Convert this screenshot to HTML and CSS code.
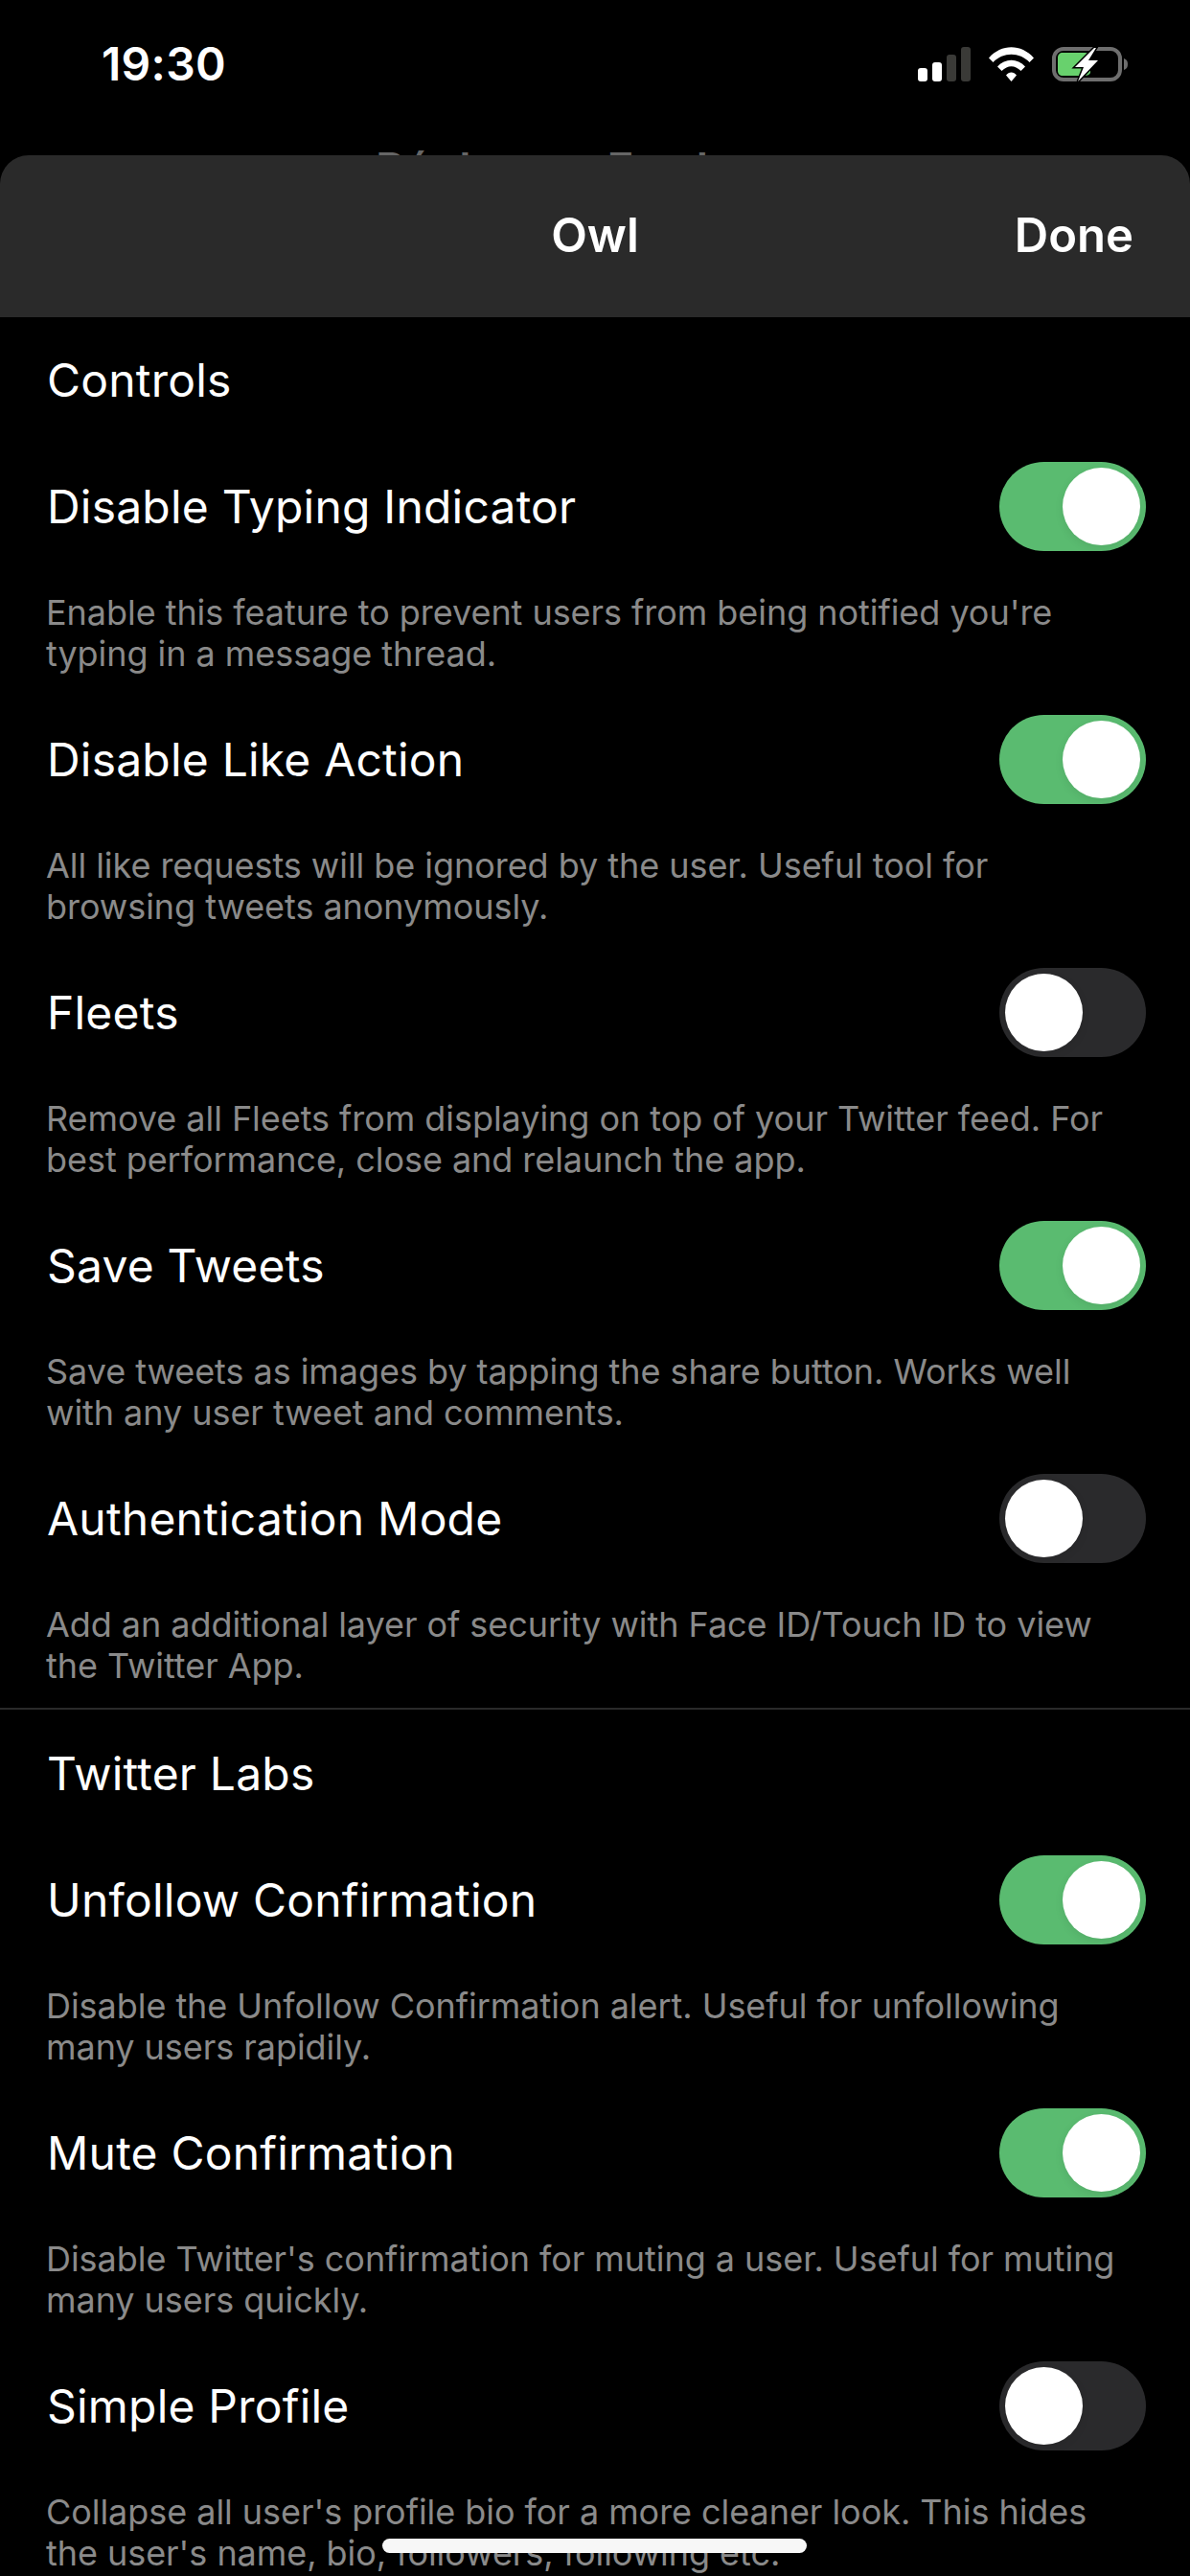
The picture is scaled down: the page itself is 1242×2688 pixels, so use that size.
FILE: index.html
```html
<!DOCTYPE html>
<html lang="en">
<head>
    <meta charset="UTF-8">
    <meta name="viewport" content="width=device-width, initial-scale=1.0">
    <title>Owl</title>
    <link rel="stylesheet" href="styles.css">
</head>
<body>

    <div class="screen">
        <div class="status-bar">
            <span class="time">19:30</span>
            <div class="status-icons">
                <svg width="55" height="36" viewBox="0 0 55 36">
                    <rect x="0" y="22" width="10" height="14" rx="3" fill="#fff"/>
                    <rect x="15" y="16" width="10" height="20" rx="3" fill="#fff"/>
                    <rect x="30" y="8" width="10" height="28" rx="3" fill="#3a3a37"/>
                    <rect x="45" y="0" width="10" height="36" rx="3" fill="#3a3a37"/>
                </svg>
                <svg width="47" height="36" viewBox="0 0 47 36">
                    <path d="M0 11.500C13 -3.500 34 -3.500 47 11.500L42.500 16C32 5 15 5 4.500 16Z" fill="#fff"/>
                    <path d="M9 20.500C17 11.500 30 11.500 38 20.500L33.500 25C27 18.500 20 18.500 13.500 25Z" fill="#fff"/>
                    <path d="M18 29.500C21 25.500 26 25.500 29 29.500L23.500 36Z" fill="#fff"/>
                </svg>
                <svg width="79" height="36" viewBox="0 0 79 36">
                    <rect x="2" y="2" width="69" height="32" rx="10" fill="none" stroke="#6e6e6e" stroke-width="4"/>
                    <path d="M75 12C78 13 79 15 79 18C79 21 78 23 75 24Z" fill="#6e6e6e"/>
                    <path d="M11 6H34C37 6 39 7 40 9V27C39 29 37 30 34 30H11C8 30 6 28 6 25V11C6 8 8 6 11 6Z" fill="#68d16d"/>
                    <path d="M44 1L24 21H33L27 36L48 14H38L46 1Z" fill="#fff" stroke="#000" stroke-width="3" paint-order="stroke"/>
                </svg>
            </div>
        </div>

        <div class="behind-title">Réglages Fowl</div>

        <div class="sheet">
            <div class="sheet-header">
                <span></span>
                <span class="sheet-title">Owl</span>
                <span class="sheet-done">Done</span>
            </div>

            <div class="section">
                <div class="section-title">Controls</div>

                <div class="row">
                    <div class="row-top">
                        <span class="row-label">Disable Typing Indicator</span>
                        <span class="toggle on"></span>
                    </div>
                    <p class="row-desc">Enable this feature to prevent users from being notified you're typing in a message thread.</p>
                </div>

                <div class="row">
                    <div class="row-top">
                        <span class="row-label">Disable Like Action</span>
                        <span class="toggle on"></span>
                    </div>
                    <p class="row-desc">All like requests will be ignored by the user. Useful tool for browsing tweets anonymously.</p>
                </div>

                <div class="row">
                    <div class="row-top">
                        <span class="row-label">Fleets</span>
                        <span class="toggle"></span>
                    </div>
                    <p class="row-desc">Remove all Fleets from displaying on top of your Twitter feed. For best performance, close and relaunch the app.</p>
                </div>

                <div class="row">
                    <div class="row-top">
                        <span class="row-label">Save Tweets</span>
                        <span class="toggle on"></span>
                    </div>
                    <p class="row-desc">Save tweets as images by tapping the share button. Works well with any user tweet and comments.</p>
                </div>

                <div class="row">
                    <div class="row-top">
                        <span class="row-label">Authentication Mode</span>
                        <span class="toggle"></span>
                    </div>
                    <p class="row-desc">Add an additional layer of security with Face ID/Touch ID to view the Twitter App.</p>
                </div>
            </div>

            <div class="section section-next">
                <div class="section-title">Twitter Labs</div>

                <div class="row">
                    <div class="row-top">
                        <span class="row-label">Unfollow Confirmation</span>
                        <span class="toggle on"></span>
                    </div>
                    <p class="row-desc">Disable the Unfollow Confirmation alert. Useful for unfollowing many users rapidily.</p>
                </div>

                <div class="row">
                    <div class="row-top">
                        <span class="row-label">Mute Confirmation</span>
                        <span class="toggle on"></span>
                    </div>
                    <p class="row-desc">Disable Twitter's confirmation for muting a user. Useful for muting many users quickly.</p>
                </div>

                <div class="row">
                    <div class="row-top">
                        <span class="row-label">Simple Profile</span>
                        <span class="toggle"></span>
                    </div>
                    <p class="row-desc">Collapse all user's profile bio for a more cleaner look. This hides the user's name, bio, followers, following etc.</p>
                </div>
            </div>
        </div>

        <div class="home-indicator"></div>
    </div>

</body>
</html>
```

FILE: styles.css
```css
html, body {
    margin: 0;
    padding: 0;
    background-color: #000;
}

.screen {
    position: relative;
    width: 1242px;
    height: 2688px;
    overflow: hidden;
    background-color: #000;
    color: #fff;
    font-family: Inter, 'Liberation Sans', sans-serif;
}

.status-bar {
    display: flex;
    justify-content: space-between;
    align-items: flex-start;
    height: 162px;
    padding: 49px 65px 0 106px;
    box-sizing: border-box;
}

.time {
    font-size: 48px;
    font-weight: 600;
    line-height: 36px;
    letter-spacing: 0.3px;
}

.status-icons {
    display: flex;
    gap: 19px;
}

.behind-title {
    position: absolute;
    top: 146px;
    left: 392px;
    font-size: 47px;
    font-weight: 600;
    line-height: 60px;
    word-spacing: 20px;
    color: #666;
    white-space: nowrap;
}

.sheet {
    position: relative;
    background-color: #000;
    border-radius: 30px 30px 0 0;
    overflow: hidden;
}

.sheet-header {
    display: grid;
    grid-template-columns: 1fr auto 1fr;
    align-items: center;
    height: 169px;
    padding: 0 59px;
    background-color: #2a2a2a;
    font-size: 49px;
    font-weight: 600;
}

.sheet-title {
    transform: translateY(-1px);
}

.sheet-done {
    text-align: right;
    transform: translateY(-1px);
}

.section-title {
    height: 151px;
    padding: 36px 49px 0;
    box-sizing: border-box;
    font-size: 48px;
    line-height: 60px;
    letter-spacing: 0.2px;
}

.section-next {
    border-top: 2px solid #2a2a2a;
}

.section-next .section-title {
    height: 152px;
    padding-top: 37px;
}

.row {
    height: 264px;
    padding: 0 46px 0 49px;
    box-sizing: border-box;
}

.row:last-child {
    height: 244px;
}

.row-top {
    display: flex;
    justify-content: space-between;
    align-items: center;
    height: 93px;
}

.row-label {
    font-size: 48px;
    letter-spacing: 0.2px;
}

.row-desc {
    margin: 43px 22px 0 -1px;
    font-size: 36px;
    line-height: 43px;
    letter-spacing: -0.05px;
    color: #8a8a8a;
}

.toggle {
    position: relative;
    width: 153px;
    height: 93px;
    border-radius: 47px;
    background-color: #2a2a2c;
}

.toggle::after {
    content: "";
    position: absolute;
    top: 6px;
    left: 6px;
    width: 81px;
    height: 81px;
    border-radius: 50%;
    background-color: #fff;
    box-shadow: 0 3px 10px rgba(0, 0, 0, 0.08);
}

.toggle.on {
    background-color: #5abb70;
}

.toggle.on::after {
    left: 66px;
}

.home-indicator {
    position: absolute;
    left: 399px;
    top: 2649px;
    width: 443px;
    height: 15px;
    border-radius: 8px;
    background-color: #f7f7f7;
}
```
